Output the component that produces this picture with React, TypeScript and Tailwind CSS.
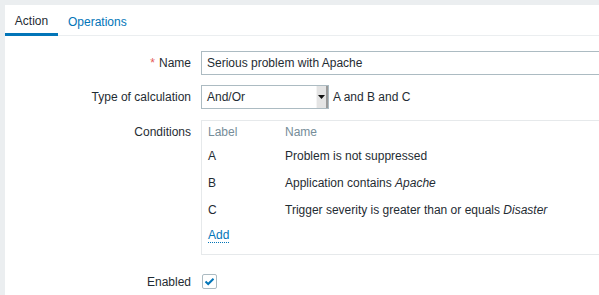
export default function App() {
  return (
    <div
      className="w-[599px] h-[295px] overflow-hidden bg-[#ebeef0] pl-[5px] pt-[5px] text-[12px] text-[#1f2c33]"
      style={{ fontFamily: '"Liberation Sans", Arial, sans-serif' }}
    >
      <div className="bg-white w-[620px] h-[300px]">
        {/* Tabs */}
        <div className="flex h-[31px] border-b border-[#ebeef0]">
          <div className="w-[53px] flex items-center justify-center border-b-[3px] border-[#0275b8] pt-[3px] -mb-px text-[#1f2c33]">
            Action
          </div>
          <div className="px-[10px] flex items-center pt-[3px] text-[#0275b8]">Operations</div>
        </div>

        <div className="pt-[15px]">
          {/* Name row */}
          <div className="flex items-center h-[24px]">
            <div className="w-[196px] text-right pr-[10px]">
              <span className="text-[#e45959] mr-[4px]">*</span>Name
            </div>
            <div className="flex-1 h-[24px] border border-[#acbbc2] flex items-center px-[5px]">
              Serious problem with Apache
            </div>
          </div>

          {/* Type of calculation */}
          <div className="flex items-center h-[24px] mt-[10px]">
            <div className="w-[196px] text-right pr-[10px]">Type of calculation</div>
            <div className="w-[128px] h-[24px] border border-[#acbbc2] flex items-center relative">
              <span className="pl-[5px]">And/Or</span>
              <div className="absolute right-0 top-0 h-full w-[12px] bg-[#e4e4e4] border-l border-[#f4f4f4] border-r-[2px] border-r-[#9a9a9a] flex items-center justify-center">
                <svg width="7" height="4" viewBox="0 0 7 4">
                  <path d="M0 0 H7 L3.5 4 Z" fill="#111" />
                </svg>
              </div>
            </div>
            <span className="ml-[4px]">A and B and C</span>
          </div>

          {/* Conditions */}
          <div className="flex mt-[11px]">
            <div className="w-[196px] text-right pr-[10px] h-[23px] flex items-center justify-end pt-[1px]">Conditions</div>
            <div className="flex-1 border border-[#e6e9eb] pl-[6px] pb-[5px]">
              <div className="flex items-center h-[21px] text-[#768d99]">
                <div className="w-[77px]">Label</div>
                <div>Name</div>
              </div>
              <div className="flex items-center h-[27px]">
                <div className="w-[77px]">A</div>
                <div>Problem is not suppressed</div>
              </div>
              <div className="flex items-center h-[27px]">
                <div className="w-[77px]">B</div>
                <div>
                  Application contains <i>Apache</i>
                </div>
              </div>
              <div className="flex items-center h-[27px]">
                <div className="w-[77px]">C</div>
                <div>
                  Trigger severity is greater than or equals <i>Disaster</i>
                </div>
              </div>
              <div className="flex items-center h-[26px]">
                <span className="text-[#0275b8] border-b border-dotted border-[#0275b8] leading-[13px]">Add</span>
              </div>
            </div>
          </div>

          {/* Enabled */}
          <div className="flex items-center mt-[19px] h-[15px]">
            <div className="w-[196px] text-right pr-[10px]">Enabled</div>
            <div className="ml-[1px] w-[15px] h-[15px] border border-[#acbbc2] rounded-[2px] flex items-center justify-center">
              <svg width="11" height="9" viewBox="0 0 11 9">
                <path d="M1.5 4.5 L4.2 7 L9.5 1.8" fill="none" stroke="#0275b8" strokeWidth="2" />
              </svg>
            </div>
          </div>
        </div>
      </div>
    </div>
  );
}
